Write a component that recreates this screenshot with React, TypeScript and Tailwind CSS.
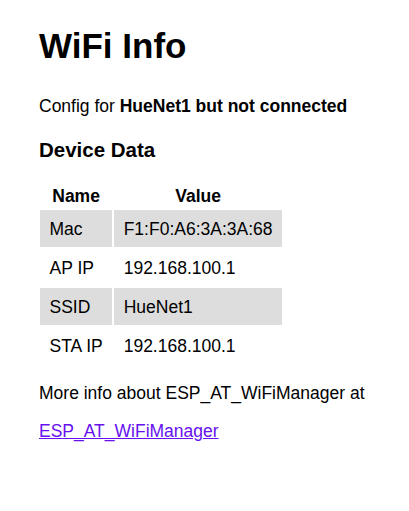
import React from "react"

interface Row {
  name: string
  value: string
}

const ROWS: Row[] = [
  { name: "Mac", value: "F1:F0:A6:3A:3A:68" },
  { name: "AP IP", value: "192.168.100.1" },
  { name: "SSID", value: "HueNet1" },
  { name: "STA IP", value: "192.168.100.1" },
]

const App: React.FC = () => {
  return (
    <div className="min-h-[511px] bg-white px-[39px] pt-[26px] text-[17.5px] leading-[1.15] text-black [font-family:'Liberation_Sans',Arial,sans-serif]">
      <h1 className="text-[35px] font-bold">WiFi Info</h1>
      <p className="mt-[30px]">
        Config for <b>HueNet1 but not connected</b>
      </p>
      <h3 className="mt-[22px] text-[20.5px] font-bold">Device Data</h3>
      <table className="-ml-px mt-[22px] border-separate border-spacing-[2px]">
        <thead>
          <tr>
            <th className="px-[9.5px] pb-[2px] text-center font-bold">Name</th>
            <th className="px-[9.5px] pb-[2px] text-center font-bold">Value</th>
          </tr>
        </thead>
        <tbody>
          {ROWS.map((row, i) => (
            <tr key={row.name} className={i % 2 === 0 ? "bg-[#dddddd]" : ""}>
              <td className="px-[9.5px] py-[8.5px] text-left">{row.name}</td>
              <td className="px-[9.5px] py-[8.5px] text-left">{row.value}</td>
            </tr>
          ))}
        </tbody>
      </table>
      <p className="mt-[16px]">More info about ESP_AT_WiFiManager at</p>
      <p className="mt-[18px]">
        <a href="#" className="text-[#6611ee] underline">
          ESP_AT_WiFiManager
        </a>
      </p>
    </div>
  )
}

export default App
